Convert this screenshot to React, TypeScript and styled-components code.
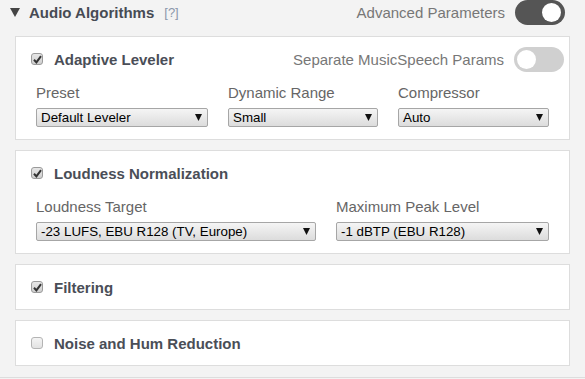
import styled, { createGlobalStyle } from 'styled-components';

const GlobalStyle = createGlobalStyle`
    body {
        margin: 0;
        background: #f3f3f3;
        font-family: "Liberation Sans", Arial, sans-serif;
    }
`;

const Section = styled.div`
    width: 585px;
    padding-bottom: 11px;
    border-bottom: 1px solid #ddd;
`;

const Header = styled.div`
    display: flex;
    align-items: center;
    height: 24px;
    padding: 0 20px 0 10px;
    margin-bottom: 12px;
`;

const Caret = styled.svg`
    width: 10px;
    height: 9px;
    margin-right: 9px;
    fill: #444;
`;

const SectionTitle = styled.div`
    font-size: 15px;
    font-weight: 700;
    color: #474b54;
`;

const Help = styled.span`
    margin-left: 10px;
    font-size: 13px;
    color: #8a97aa;
`;

const Spacer = styled.div`
    flex: 1;
`;

const SwitchLabel = styled.span`
    font-size: 15px;
    color: #777;
    margin-right: 10px;
`;

const Switch = styled.div<{ $on: boolean }>`
    position: relative;
    width: 50px;
    height: 25px;
    border-radius: 13px;
    background: ${({ $on }) => ($on ? '#555' : '#d0d0d0')};
    flex: none;

    &::after {
        content: '';
        position: absolute;
        top: 3px;
        left: ${({ $on }) => ($on ? '27px' : '3px')};
        width: 19px;
        height: 19px;
        border-radius: 50%;
        background: #fff;
    }
`;

const PanelList = styled.div`
    display: flex;
    flex-direction: column;
    gap: 10px;
    padding: 0 15px;
`;

const Panel = styled.div`
    background: #fff;
    border: 1px solid #ddd;
    padding: 9px 5px 9px 15px;
`;

const TitleRow = styled.div`
    display: flex;
    align-items: center;
    height: 26px;
`;

const Box = styled.span<{ $checked: boolean }>`
    display: flex;
    align-items: center;
    justify-content: center;
    width: 10px;
    height: 10px;
    margin-right: 11px;
    border: 1px solid ${({ $checked }) => ($checked ? '#9a9a9a' : '#b4b4b4')};
    border-radius: 3px;
    background: ${({ $checked }) =>
        $checked ? 'linear-gradient(#e6e6e6, #cfcfcf)' : 'linear-gradient(#f4f4f4, #e2e2e2)'};
    flex: none;
`;

const PanelTitle = styled.div`
    font-size: 15px;
    font-weight: 700;
    color: #4a4e57;
`;

const Fields = styled.div<{ $cols: string }>`
    display: grid;
    grid-template-columns: ${({ $cols }) => $cols};
    column-gap: 20px;
    padding-left: 5px;
    margin: 12px 0 3px;
`;

const Field = styled.div`
    display: flex;
    flex-direction: column;
`;

const FieldLabel = styled.div`
    font-size: 15px;
    line-height: 18px;
    color: #666;
    margin-bottom: 6px;
`;

const Select = styled.div`
    display: flex;
    align-items: center;
    justify-content: space-between;
    box-sizing: border-box;
    height: 19px;
    padding: 0 5px 0 4px;
    border: 1px solid #a6a6a6;
    border-radius: 2px;
    background: linear-gradient(#f5f5f5, #dcdcdc);
    font-size: 13.333px;
    color: #000;
`;

const Arrow = styled.svg`
    width: 7px;
    height: 7px;
    fill: #111;
`;

type CheckProps = { checked: boolean };

const Check = ({ checked }: CheckProps) => (
    <Box $checked={checked}>
        {checked && (
            <svg width="9" height="9" viewBox="0 0 9 9">
                <path d="M1 4.8 L3.4 7.4 L8 1.2" stroke="#333" strokeWidth="2" fill="none" />
            </svg>
        )}
    </Box>
);

type DropProps = { label: string; value: string };

const Drop = ({ label, value }: DropProps) => (
    <Field>
        <FieldLabel>{label}</FieldLabel>
        <Select>
            <span>{value}</span>
            <Arrow viewBox="0 0 7 7">
                <polygon points="0,0 7,0 3.5,7" />
            </Arrow>
        </Select>
    </Field>
);

const App = () => (
    <>
        <GlobalStyle />
        <Section>
            <Header>
                <Caret viewBox="0 0 10 9">
                    <polygon points="0,0 10,0 5,9" />
                </Caret>
                <SectionTitle>Audio Algorithms</SectionTitle>
                <Help>[?]</Help>
                <Spacer />
                <SwitchLabel>Advanced Parameters</SwitchLabel>
                <Switch $on />
            </Header>
            <PanelList>
                <Panel>
                    <TitleRow>
                        <Check checked />
                        <PanelTitle>Adaptive Leveler</PanelTitle>
                        <Spacer />
                        <SwitchLabel>Separate MusicSpeech Params</SwitchLabel>
                        <Switch $on={false} />
                    </TitleRow>
                    <Fields $cols="172px 150px 151px">
                        <Drop label="Preset" value="Default Leveler" />
                        <Drop label="Dynamic Range" value="Small" />
                        <Drop label="Compressor" value="Auto" />
                    </Fields>
                </Panel>
                <Panel>
                    <TitleRow>
                        <Check checked />
                        <PanelTitle>Loudness Normalization</PanelTitle>
                    </TitleRow>
                    <Fields $cols="280px 213px">
                        <Drop label="Loudness Target" value="-23 LUFS, EBU R128 (TV, Europe)" />
                        <Drop label="Maximum Peak Level" value="-1 dBTP (EBU R128)" />
                    </Fields>
                </Panel>
                <Panel>
                    <TitleRow>
                        <Check checked />
                        <PanelTitle>Filtering</PanelTitle>
                    </TitleRow>
                </Panel>
                <Panel>
                    <TitleRow>
                        <Check checked={false} />
                        <PanelTitle>Noise and Hum Reduction</PanelTitle>
                    </TitleRow>
                </Panel>
            </PanelList>
        </Section>
    </>
);

export default App;
